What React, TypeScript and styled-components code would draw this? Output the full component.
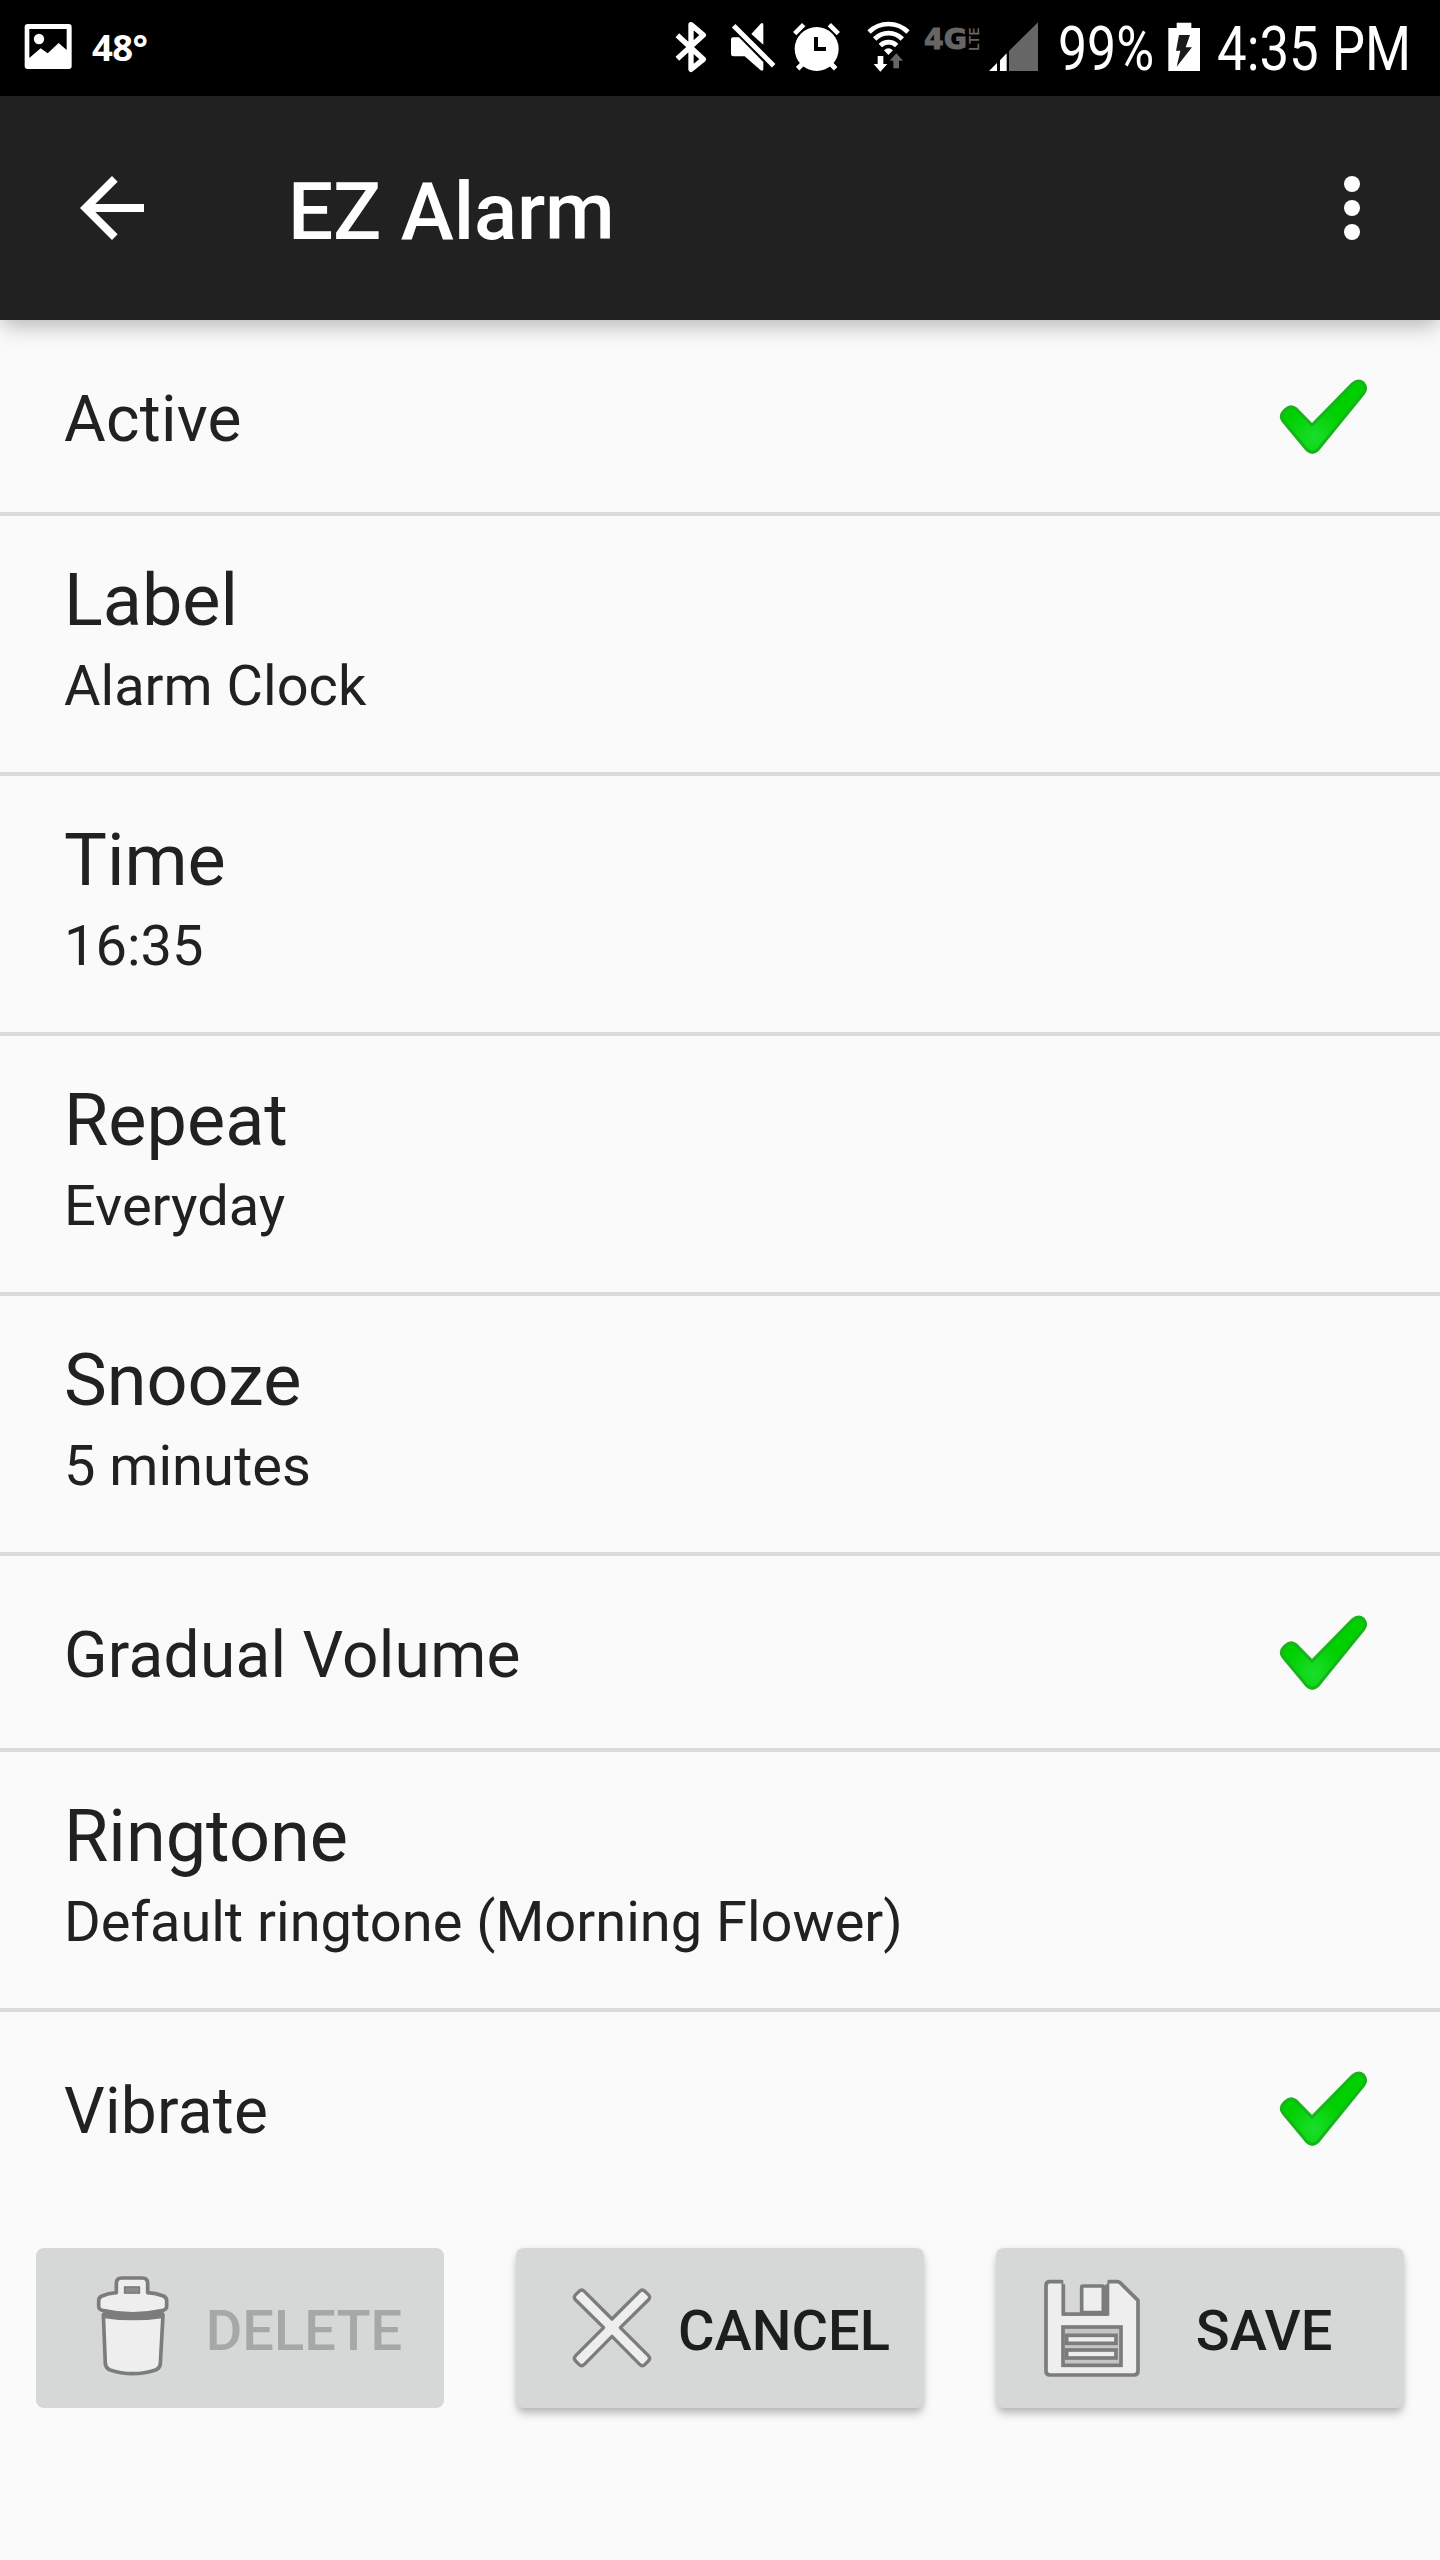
import React from "react";
import styled, { createGlobalStyle } from "styled-components";

const GlobalStyle = createGlobalStyle`
  *, *::before, *::after { box-sizing: border-box; }
  body {
    margin: 0;
    background: #fafafa;
    color: #212121;
    font-family: Roboto, "Liberation Sans", sans-serif;
  }
`;

const Screen = styled.div`
  display: flex;
  flex-direction: column;
  width: 1440px;
  height: 2560px;
  background: #fafafa;
  overflow: hidden;
`;

const StatusBar = styled.header`
  display: flex;
  justify-content: space-between;
  height: 96px;
  background: #000;
  color: #fff;
`;

const StatusGroup = styled.div<{ $start?: number; $end?: number }>`
  display: flex;
  height: 96px;
  padding-left: ${(p) => p.$start ?? 0}px;
  padding-right: ${(p) => p.$end ?? 0}px;
`;

const Glyph = styled.svg<{ $w: number; $h: number }>`
  display: block;
  flex: none;
  width: ${(p) => p.$w}px;
  height: ${(p) => p.$h}px;
`;

const Temperature = styled.span`
  padding-left: 16px;
  font: 700 36.5px/94px "Noto Sans", sans-serif;
  letter-spacing: -0.6px;
`;

const Condensed = styled.span<{ $w: number; $scale: number }>`
  flex: none;
  width: ${(p) => p.$w}px;
  font-size: 60.5px;
  line-height: 99px;
  white-space: nowrap;
  transform: scaleX(${(p) => p.$scale});
  transform-origin: left center;
`;

const AppBar = styled.div`
  display: flex;
  align-items: center;
  flex: none;
  height: 224px;
  padding: 0 40px 0 64px;
  background: #212121;
  color: #fff;
  box-shadow: 0 8px 20px -2px rgba(0, 0, 0, 0.27);
  z-index: 1;
`;

const IconButton = styled.button`
  display: flex;
  padding: 0;
  border: 0;
  background: none;
  color: inherit;
`;

const Title = styled.h1`
  flex: 1;
  margin: 0;
  padding: 8px 0 0 128px;
  font-size: 80px;
  font-weight: 500;
  line-height: 94px;
  letter-spacing: -0.15px;
`;

const Row = styled.div<{ $tall?: boolean; $last?: boolean }>`
  display: flex;
  flex: none;
  align-items: ${(p) => (p.$tall ? "flex-start" : "center")};
  justify-content: space-between;
  height: ${(p) => (p.$last ? 192 : p.$tall ? 260 : 196)}px;
  padding: ${(p) => (p.$tall ? 43 : 0)}px 66px 0 64px;
  border-bottom: ${(p) => (p.$last ? "0" : "4px solid #dbdbdb")};
`;

const ToggleLabel = styled.span`
  padding-top: 8px;
  font-size: 64px;
  line-height: 76px;
  letter-spacing: 0.25px;
`;

const FieldText = styled.div`
  display: flex;
  flex-direction: column;
  gap: 10px;
`;

const FieldLabel = styled.span`
  font-size: 72px;
  line-height: 84px;
`;

const FieldValue = styled.span`
  font-size: 56px;
  line-height: 66px;
`;

const Actions = styled.div`
  display: grid;
  grid-template-columns: repeat(3, 408px);
  column-gap: 72px;
  padding: 44px 36px 0;
`;

const ActionButton = styled.button`
  display: flex;
  align-items: center;
  height: 160px;
  padding: 0 24px 0 40px;
  border: 0;
  border-radius: 8px;
  background: #d6d8d7;
  color: #1c1d1d;
  font: 500 56px/66px Roboto, sans-serif;
  box-shadow: 0 7px 9px -1px rgba(0, 0, 0, 0.22), 0 1px 6px rgba(0, 0, 0, 0.1);

  &:disabled {
    color: #a6a8a7;
    box-shadow: none;
  }
`;

const ActionLabel = styled.span`
  flex: 1;
  padding-top: 5px;
  text-align: center;
`;

// Status glyphs are drawn on a grid of three units per pixel.
const PictureIcon = () => (
  <Glyph $w={56} $h={96} viewBox="60 0 168 288">
    <rect x="74" y="72" width="141" height="135" rx="9" fill="#fff" />
    <path d="M88 87H200V150L176 129L143 160L122 145L88 174Z" fill="#000" />
    <circle cx="117" cy="117" r="15.5" fill="#fff" />
  </Glyph>
);

const BluetoothIcon = () => (
  <Glyph $w={54} $h={96} viewBox="60 0 162 288">
    <path
      d="M82 106L160 178L123 208V74L160 105L82 176"
      fill="none"
      stroke="#fff"
      strokeWidth="16"
      strokeLinejoin="round"
    />
  </Glyph>
);

const MuteIcon = () => (
  <Glyph $w={60} $h={96} viewBox="222 0 180 288">
    <path d="M304 102L332 71Q340 66 340 76V134Z" fill="#fff" />
    <path d="M249 112H267L340 186V208Q339 215 332 211L284 169H250Q243 169 243 162V118Q243 112 249 112Z" fill="#fff" />
    <path d="M251 77L371 197" stroke="#fff" strokeWidth="15" />
  </Glyph>
);

const AlarmIcon = () => (
  <Glyph $w={66} $h={96} viewBox="402 0 198 288">
    <circle cx="500" cy="147" r="66" fill="#fff" />
    <g stroke="#fff" fill="none">
      <path d="M434 101L461 74M538 74L565 101" strokeWidth="14" />
      <path d="M443 206L462 187M538 187L557 206" strokeWidth="15" />
    </g>
    <path d="M498 111V147H528" fill="none" stroke="#000" strokeWidth="12" />
  </Glyph>
);

const WifiIcon = () => (
  <Glyph $w={70} $h={96} viewBox="600 0 210 288">
    <g fill="none" stroke="#fff" strokeWidth="14">
      <path d="M657 96A83 83 0 0 1 774 96" />
      <path d="M674 117A58 58 0 0 1 757 117" />
      <path d="M691 137A34 34 0 0 1 740 137" />
    </g>
    <path d="M702 151Q715 139 729 151L715 165Z" fill="#fff" />
    <path d="M683 168H700V192H712L691 215L671 192H683Z" fill="#fff" />
    <path d="M730 205V182H719L739 160L759 182H747V205Z" fill="#666" />
  </Glyph>
);

const NetworkLabel = () => (
  <Glyph $w={64} $h={96} viewBox="810 0 192 288" fill="#666" fontFamily="DejaVu Sans" fontWeight="700">
    <text x="822" y="148" fontSize="86" textLength="129" lengthAdjust="spacingAndGlyphs" stroke="#666" strokeWidth="3">
      4G
    </text>
    <text
      fontFamily="Inter"
      fontWeight="600"
      fontSize="41"
      textLength="70"
      lengthAdjust="spacingAndGlyphs"
      transform="translate(987 152) rotate(-90)"
    >
      LTE
    </text>
  </Glyph>
);

const SignalIcon = () => (
  <Glyph $w={56} $h={96} viewBox="1002 0 168 288">
    <path d="M1017 213L1041 189V213ZM1050 213V181L1070 160V213Z" fill="#fff" />
    <path d="M1077 213V153L1164 67V213Z" fill="#666" />
  </Glyph>
);

const BatteryIcon = () => (
  <Glyph $w={40} $h={96} viewBox="375 0 120 288">
    <path d="M385 84H410V68H454V84H480V213H385Z" fill="#fff" />
    <path d="M417 105H450L437 142H456L410 200L421 152H408Z" fill="#1a1a1a" />
  </Glyph>
);

const BackIcon = () => (
  <Glyph $w={96} $h={96} viewBox="0 0 24 24">
    <path d="M20 11H7.83l5.59-5.59L12 4l-8 8 8 8 1.41-1.41L7.83 13H20v-2z" fill="#fff" />
  </Glyph>
);

const MoreIcon = () => (
  <Glyph $w={96} $h={96} viewBox="0 0 24 24" fill="#fff">
    <circle cx="12" cy="6" r="2" />
    <circle cx="12" cy="12" r="2" />
    <circle cx="12" cy="18" r="2" />
  </Glyph>
);

const CheckIcon = () => (
  <Glyph $w={100} $h={86} viewBox="99 699 300 258">
    <defs>
      <radialGradient id="check" gradientUnits="userSpaceOnUse" cx="220" cy="890" r="90">
        <stop offset="0" stopColor="#1ade2c" />
        <stop offset="1" stopColor="#00d000" />
      </radialGradient>
    </defs>
    <path
      d="M166 807L213 855L335 731Q352 716 367 729Q380 744 368 760L231 929Q214 945 197 929L126 843Q115 828 128 814L134 808Q150 793 166 807Z"
      fill="url(#check)"
      stroke="#16b31a"
      strokeWidth="9"
      strokeLinejoin="round"
    />
  </Glyph>
);

const TrashIcon = () => (
  <Glyph $w={112} $h={160} viewBox="168 54 336 480" stroke="#7b7d7c" strokeWidth="11" strokeLinejoin="round">
    <path d="M250 254L256 402Q257 413 268 419Q338 443 409 419Q420 413 421 402L429 254Z" fill="#eee" />
    <path d="M254 250Q338 266 426 250V259Q338 272 254 259Z" fill="#7b7d7c" />
    <path
      d="M236 212Q236 202 246 198Q264 190 289 188V160Q289 144 305 144H367Q383 144 383 160V188Q408 189 430 198Q440 202 440 212V229Q440 238 430 241Q338 262 246 241Q236 238 236 229Z"
      fill="#eee"
    />
    <rect x="314" y="171" width="44" height="18" fill="#8b8d8c" strokeWidth="5" strokeLinejoin="miter" />
  </Glyph>
);

const CrossIcon = () => (
  <Glyph $w={112} $h={160} viewBox="198 54 336 480">
    <path
      d="M366 267L449 184Q457 176 465 184L475 194Q483 202 475 210L391 293L475 377Q483 385 475 393L465 403Q457 411 449 403L366 319L283 403Q275 411 267 403L257 393Q249 385 257 377L341 293L257 210Q249 202 257 194L267 184Q275 176 283 184Z"
      fill="#eee"
      stroke="#7b7d7c"
      strokeWidth="10"
      strokeLinejoin="round"
    />
  </Glyph>
);

const DiskIcon = () => (
  <Glyph $w={112} $h={160} viewBox="198 54 336 480" fill="#eee" stroke="#7b7d7c" strokeWidth="11">
    <path
      d="M281 252V163Q281 155 273 155H240Q228 155 228 167V423Q228 435 240 435H492Q504 435 504 423V211L450 158Q447 155 442 155H420Q412 155 412 163V252Z"
      strokeLinejoin="round"
    />
    <path d="M280 145V252H412V145" fill="#d6d8d7" stroke="none" />
    <path d="M280 163V252H412V163" fill="none" strokeLinejoin="miter" />
    <rect x="399" y="166" width="14" height="86" fill="#7b7d7c" stroke="none" />
    <rect x="335" y="168" width="65" height="80" rx="4" />
    <rect x="279" y="291" width="174" height="115" fill="#c4c5c4" />
    <rect x="290" y="316" width="148" height="24" />
    <rect x="290" y="360" width="148" height="24" />
  </Glyph>
);

type Setting = { label: string; value?: string };

const settings: Setting[] = [
  { label: "Active" },
  { label: "Label", value: "Alarm Clock" },
  { label: "Time", value: "16:35" },
  { label: "Repeat", value: "Everyday" },
  { label: "Snooze", value: "5 minutes" },
  { label: "Gradual Volume" },
  { label: "Ringtone", value: "Default ringtone (Morning Flower)" },
  { label: "Vibrate" },
];

const SettingRow = ({ label, value, last }: Setting & { last: boolean }) =>
  value ? (
    <Row $tall>
      <FieldText>
        <FieldLabel>{label}</FieldLabel>
        <FieldValue>{value}</FieldValue>
      </FieldText>
    </Row>
  ) : (
    <Row $last={last}>
      <ToggleLabel>{label}</ToggleLabel>
      <CheckIcon />
    </Row>
  );

export default function App() {
  return (
    <Screen>
      <GlobalStyle />
      <StatusBar>
        <StatusGroup $start={20}>
          <PictureIcon />
          <Temperature>48°</Temperature>
        </StatusGroup>
        <StatusGroup $end={18}>
          <BluetoothIcon />
          <MuteIcon />
          <AlarmIcon />
          <WifiIcon />
          <NetworkLabel />
          <SignalIcon />
          <StatusGroup $start={18}>
            <Condensed $w={107} $scale={0.855}>99%</Condensed>
            <BatteryIcon />
          </StatusGroup>
          <StatusGroup $start={12}>
            <Condensed $w={205} $scale={0.872}>4:35 PM</Condensed>
          </StatusGroup>
        </StatusGroup>
      </StatusBar>
      <AppBar>
        <IconButton aria-label="Back">
          <BackIcon />
        </IconButton>
        <Title>EZ Alarm</Title>
        <IconButton aria-label="More options">
          <MoreIcon />
        </IconButton>
      </AppBar>
      <main>
        {settings.map((s, i) => (
          <SettingRow key={s.label} {...s} last={i === settings.length - 1} />
        ))}
      </main>
      <Actions>
        <ActionButton disabled>
          <TrashIcon />
          <ActionLabel>DELETE</ActionLabel>
        </ActionButton>
        <ActionButton>
          <CrossIcon />
          <ActionLabel>CANCEL</ActionLabel>
        </ActionButton>
        <ActionButton>
          <DiskIcon />
          <ActionLabel>SAVE</ActionLabel>
        </ActionButton>
      </Actions>
    </Screen>
  );
}
